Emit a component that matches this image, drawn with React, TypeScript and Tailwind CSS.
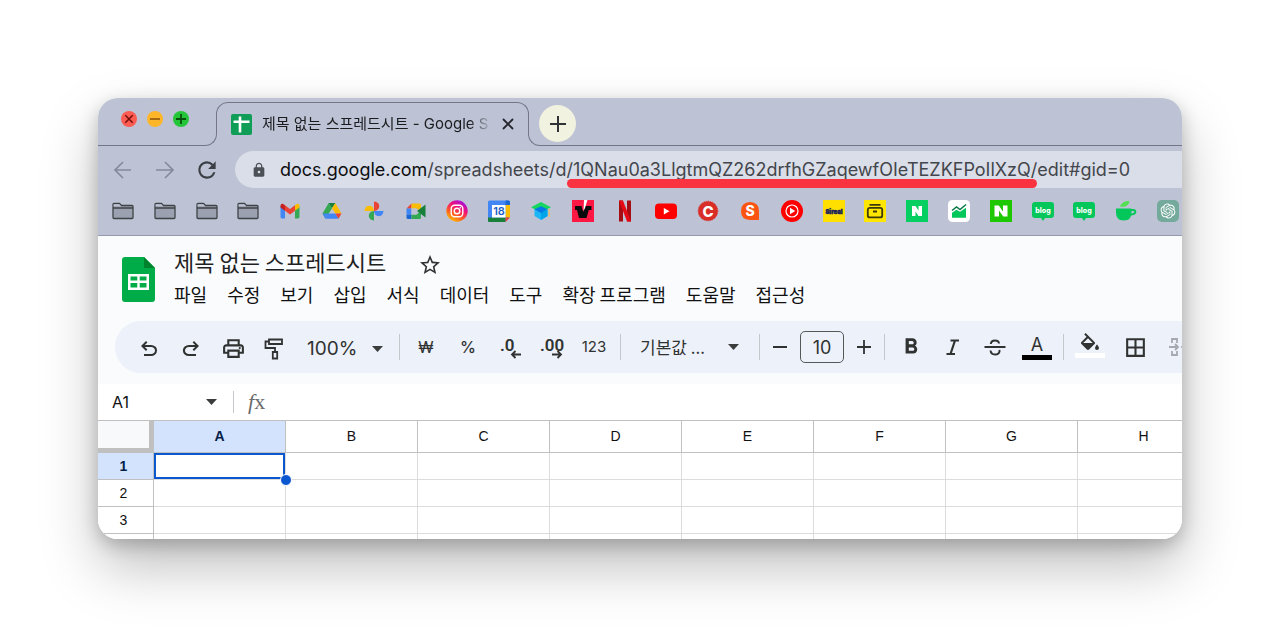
import type { ReactNode } from 'react';
import { MdBorderAll, MdFormatBold, MdLock, MdRefresh, MdStarBorder } from 'react-icons/md';
import { RiOpenaiFill } from 'react-icons/ri';

const MENUS = ['파일', '수정', '보기', '삽입', '서식', '데이터', '도구', '확장 프로그램', '도움말', '접근성'];
const COLUMNS = ['A', 'B', 'C', 'D', 'E', 'F', 'G', 'H'];
const ROWS = [1, 2, 3];

const LATIN = "font-['Inter','Noto_Sans_CJK_KR',sans-serif]";
const HANGUL = "font-['Noto_Sans_CJK_KR',sans-serif]";

function Icon({ children, size = 22 }: { children: ReactNode; size?: number }) {
  return (
    <svg width={size} height={size} viewBox="0 0 22 22" fill="none" aria-hidden="true">
      {children}
    </svg>
  );
}

function Folder() {
  return (
    <Icon>
      <path d="M1 17.5V4.500q0-1 1-1h5.500l2 2H20q1 0 1 1v11q0 1-1 1H2q-1 0-1-1z" fill="#9ba1b0" stroke="#3f4246" strokeWidth="1.3" />
      <path d="M1.600 4.200h5.700l1.700 2H1.600z" fill="#bdc3d4" />
      <path d="M1 8h20" stroke="#3f4246" strokeWidth="1.3" />
    </Icon>
  );
}

function Blog() {
  return (
    <Icon>
      <path d="M3 2h16q3 0 3 3v10q0 3-3 3h-6l-2 3-2-3H3q-3 0-3-3V5q0-3 3-3z" fill="#03c75a" />
      <text x="11" y="12.5" fontSize="7" fontWeight="800" fill="#fff" textAnchor="middle">blog</text>
    </Icon>
  );
}

const BOOKMARKS: { label: string; icon: ReactNode }[] = [
  { label: '폴더 1', icon: <Folder /> },
  { label: '폴더 2', icon: <Folder /> },
  { label: '폴더 3', icon: <Folder /> },
  { label: '폴더 4', icon: <Folder /> },
  {
    label: 'Gmail',
    icon: (
      <Icon>
        <path d="M1.5 6v11q0 1.4 1.4 1.4H6V9.5z" fill="#4285f4" />
        <path d="M20.5 6v11q0 1.4-1.4 1.4H16V9.5z" fill="#34a853" />
        <path d="M6 5.2l5 3.900 5-3.900v5.500l-5 3.900-5-3.900z" fill="#ea4335" />
        <path d="M1.500 6q0-2.500 2.300-2.200L6 5.200v5.600L1.500 7.400z" fill="#c5221f" />
        <path d="M20.500 6q0-2.500-2.300-2.200L16 5.200v5.600l4.500-3.400z" fill="#fbbc04" />
      </Icon>
    ),
  },
  {
    label: 'Drive',
    icon: (
      <Icon>
        <path d="M7.700 3L1.500 13.500l3 5.200L11 8.300z" fill="#34a853" />
        <path d="M7.700 3h6.600L11 8.300z" fill="#188038" />
        <path d="M14.300 3l6.200 10.500h-6.200L11 8.300z" fill="#fbbc04" />
        <path d="M4.500 18.700l3-5.200h6.800l3.200 5.200z" fill="#4285f4" />
        <path d="M1.500 13.500h6l-3 5.200z" fill="#4285f4" />
        <path d="M14.300 13.500h6.200l-3 5.200z" fill="#ea4335" />
      </Icon>
    ),
  },
  {
    label: 'Photos',
    icon: (
      <Icon>
        <path d="M11 1.500q5.200.5 5.200 4.700T11 11z" fill="#ea4335" />
        <path d="M20.500 11q-.5 5.200-4.700 5.200T11 11z" fill="#4285f4" />
        <path d="M11 20.500q-5.200-.5-5.200-4.700T11 11z" fill="#34a853" />
        <path d="M1.500 11q.5-5.200 4.700-5.200T11 11z" fill="#fbbc04" />
      </Icon>
    ),
  },
  {
    label: 'Meet',
    icon: (
      <Icon>
        <path d="M6.500 3.500v5h-5z" fill="#ea4335" />
        <path d="M1.500 8.500h5v6h-5z" fill="#4285f4" />
        <path d="M1.500 14.500h5v4.500H3q-1.500 0-1.500-1.500z" fill="#1967d2" />
        <path d="M6.500 3.500h8q1.500 0 1.500 1.500v6l-4.500-2.500h-5z" fill="#fbbc04" />
        <path d="M6.500 14.500h5L16 11v6.500q0 1.500-1.500 1.500h-8z" fill="#34a853" />
        <path d="M12 11l8.500-6.500v13z" fill="#188038" />
        <path d="M6.500 8.500h5v6h-5z" fill="#bdc3d4" />
      </Icon>
    ),
  },
  {
    label: 'Instagram',
    icon: (
      <Icon>
        <defs>
          <linearGradient id="insta" x1=".2" y1="1" x2=".8" y2="0">
            <stop offset="0" stopColor="#ffc800" />
            <stop offset=".35" stopColor="#ff5a24" />
            <stop offset=".65" stopColor="#f0107a" />
            <stop offset="1" stopColor="#9a10ee" />
          </linearGradient>
        </defs>
        <circle cx="11" cy="11" r="10.7" fill="url(#insta)" />
        <rect x="5.2" y="5.2" width="11.6" height="11.6" rx="3.5" stroke="#fff" strokeWidth="1.4" />
        <circle cx="11" cy="11" r="2.8" stroke="#fff" strokeWidth="1.4" />
        <circle cx="14.2" cy="7.8" r=".8" fill="#fff" />
      </Icon>
    ),
  },
  {
    label: 'Calendar',
    icon: (
      <Icon>
        <path d="M0 2q0-1.500 1.500-1.500h19Q22 .5 22 2v15l-5 5H1.500Q0 22 0 20.500z" fill="#4285f4" />
        <path d="M17.500 5H22v12.500h-4.500z" fill="#fbbc04" />
        <path d="M0 17.500h17.500V22h-16Q0 22 0 20.500z" fill="#188038" />
        <path d="M17.500 .5h3Q22 .5 22 2v3h-4.500z" fill="#1967d2" />
        <path d="M17.500 17.500H22L17.500 22z" fill="#ea4335" />
        <path d="M4 5h13.500v12.500H4z" fill="#fff" />
        <text x="11" y="15.2" fontSize="11" fontWeight="600" fill="#1a5fc8" textAnchor="middle">18</text>
      </Icon>
    ),
  },
  {
    label: 'Class',
    icon: (
      <Icon>
        <path d="M4.500 9.500L11 6l6.500 3.500v6.500L11 20l-6.500-4z" fill="#1cb5f5" />
        <path d="M11 12.500l6.500-3v6.500L11 20z" fill="#00a5e8" />
        <path d="M11 2l10 5.200-10 5.300L1 7.200z" fill="#16d65f" />
        <path d="M4.500 9.300L11 6.200l6.500 3.100L11 13z" fill="#0579e8" />
        <path d="M19.300 9v8" stroke="#e4bd72" strokeWidth="1.5" />
      </Icon>
    ),
  },
  {
    label: 'V',
    icon: (
      <Icon>
        <path d="M0 0h22v22H0z" fill="#ff1744" />
        <path d="M3 6h6.500l1.700 6L13 6h6.500v4h-2.700L14.500 18H7L5 10H3z" fill="#0b0b0d" />
        <path d="M12 0h3.500l-2.500 8-1.500 3z" fill="#fff" />
      </Icon>
    ),
  },
  {
    label: 'Netflix',
    icon: (
      <Icon>
        <path d="M5 .5h4v21H5zM13 .5h4v21h-4z" fill="#a50d14" />
        <path d="M5 .5h4l8 21h-4z" fill="#e50914" />
      </Icon>
    ),
  },
  {
    label: 'YouTube',
    icon: (
      <Icon>
        <rect x="0" y="3.5" width="22" height="15.5" rx="4" fill="#f00" />
        <path d="M8.800 8l5.700 3.200-5.700 3.200z" fill="#fff" />
      </Icon>
    ),
  },
  {
    label: 'C',
    icon: (
      <Icon>
        <circle cx="11" cy="11" r="9.8" fill="#d92d27" stroke="#d92d27" strokeDasharray="1 1" />
        <text x="11" y="16.5" fontSize="15" fontWeight="800" fill="#fff" textAnchor="middle">C</text>
      </Icon>
    ),
  },
  {
    label: 'S',
    icon: (
      <Icon>
        <path d="M11 2q9 .3 9 9v9h-9q-9-.3-9-9t9-9z" fill="#fb5310" />
        <text x="11" y="16" fontSize="14" fontWeight="800" fill="#fff" textAnchor="middle">S</text>
      </Icon>
    ),
  },
  {
    label: 'YouTube Music',
    icon: (
      <Icon>
        <circle cx="11" cy="11" r="11" fill="#f00" />
        <circle cx="11" cy="11" r="6" stroke="#fff" strokeWidth="1.2" />
        <path d="M9 7.800l5.200 3.200L9 14.200z" fill="#fff" />
      </Icon>
    ),
  },
  {
    label: 'Sireal',
    icon: (
      <Icon>
        <path d="M0 0h22v22H0z" fill="#ffdf00" />
        <text x="11" y="13.5" fontSize="6" fontWeight="900" fill="#17215c" stroke="#17215c" strokeWidth=".5" textAnchor="middle">Sireal</text>
      </Icon>
    ),
  },
  {
    label: 'Box',
    icon: (
      <Icon>
        <path d="M0 0h22v22H0z" fill="#ffe600" />
        <path d="M5.500 4.800h11" stroke="#3c3a0b" strokeWidth="1.8" />
        <rect x="3.8" y="7.8" width="14.4" height="9.6" rx="2" stroke="#3c3a0b" strokeWidth="1.8" />
        <path d="M9 11.500h4" stroke="#3c3a0b" strokeWidth="1.8" />
      </Icon>
    ),
  },
  {
    label: 'Naver',
    icon: (
      <Icon>
        <path d="M0 0h22v22H0z" fill="#04cf60" />
        <path d="M6 6h3.500l3 4.500V6H16v10h-3.500l-3-4.500V16H6z" fill="#fff" />
      </Icon>
    ),
  },
  {
    label: 'Chart',
    icon: (
      <Icon>
        <rect width="22" height="22" rx="4.5" fill="#fff" />
        <path d="M4 12.800l4.500-3 3.500 2 6-4v10H4z" fill="#03c75a" />
        <path d="M4 10.500l4.500-3.500 3.500 2.500 6-5" stroke="#0a7a48" strokeWidth="1.5" />
      </Icon>
    ),
  },
  {
    label: 'Naver Home',
    icon: (
      <Icon>
        <path d="M0 0h22v22H0z" fill="#1ec800" />
        <path d="M4.500 5.500h4.300l4.200 6v-6h4.500v11h-4.300l-4.200-6v6H4.500z" fill="#fff" />
      </Icon>
    ),
  },
  { label: 'Blog 1', icon: <Blog /> },
  { label: 'Blog 2', icon: <Blog /> },
  {
    label: 'Cafe',
    icon: (
      <Icon>
        <path d="M1 8.500h15.500v4q0 8-7.700 8T1 12.500z" fill="#03c75a" />
        <path d="M15.500 10h2.800q2.400.3 2 2.300t-5 2.400" stroke="#03c75a" strokeWidth="2" />
        <path d="M5 6.800Q6.500 1 14.500 1q-1 5.800-7 5.800z" fill="#52e052" />
      </Icon>
    ),
  },
  {
    label: 'ChatGPT',
    icon: (
      <span className="flex size-[22px] items-center justify-center rounded-[5px] bg-[#74aa9c] text-white">
        <RiOpenaiFill size={18} />
      </span>
    ),
  },
];

function ToolButton({ label, children }: { label: string; children: ReactNode }) {
  return (
    <button type="button" aria-label={label} className="flex h-9 w-[42px] shrink-0 items-center justify-center">
      {children}
    </button>
  );
}

function Divider() {
  return <div className="h-[26px] w-px shrink-0 bg-[#c4c7cc]" />;
}

function Caret() {
  return (
    <svg width="11" height="6" viewBox="0 0 11 6" className="pointer-events-none shrink-0" aria-hidden="true">
      <path d="M0 0h11L5.500 6z" fill="#3a3d3b" />
    </svg>
  );
}

function TabStrip() {
  return (
    <div className="flex h-12">
      <div className="grid w-[119px] shrink-0">
        <div className="col-start-1 row-start-1 h-[24px] self-end rounded-br-[12px] border-r border-b border-[#747688]" />
        <div className="col-start-1 row-start-1 flex gap-[10px] pt-[13px] pl-[23px]">
          <button type="button" aria-label="닫기" className="size-4 rounded-full bg-[#fe5b52]">
            <svg viewBox="0 0 16 16" stroke="#730d08" strokeWidth="1.5"><path d="M4.300 4.300l7.400 7.400M11.700 4.300l-7.400 7.400" /></svg>
          </button>
          <button type="button" aria-label="최소화" className="size-4 rounded-full bg-[#fdb62a]">
            <svg viewBox="0 0 16 16" stroke="#8a5006" strokeWidth="1.5"><path d="M3 8h10" /></svg>
          </button>
          <button type="button" aria-label="최대화" className="size-4 rounded-full bg-[#25c53a]">
            <svg viewBox="0 0 16 16" stroke="#06520c" strokeWidth="1.8"><path d="M3 8h10M8 3v10" /></svg>
          </button>
        </div>
      </div>

      <div className="-ml-px grid w-[313px] shrink-0 pt-1">
        <div className="col-start-1 row-start-1 h-[20px] rounded-t-[12px] border-x border-t border-[#747688]" />
        <div role="tab" aria-selected="true" className="col-start-1 row-start-1 flex items-center pl-[15px]">
          <svg width="21" height="21" viewBox="0 0 21 21" aria-hidden="true">
            <rect width="21" height="21" rx="2" fill="#0f9d58" />
            <path d="M2.500 7.800h16M9 2.500v16" stroke="#fff" strokeWidth="2.6" />
          </svg>
          <span className={`ml-[10px] w-[230px] text-[15px] leading-6 whitespace-nowrap text-[#1b1c20] mask-r-from-90% ${LATIN}`}>
            제목 없는 스프레드시트 - Google S
          </span>
          <button type="button" aria-label="탭 닫기" className="ml-[7px] p-[3px]">
            <svg width="12" height="12" viewBox="0 0 12 12" stroke="#24262b" strokeWidth="1.8"><path d="M1 1l10 10M11 1L1 11" /></svg>
          </button>
        </div>
      </div>

      <div className="-ml-px grid grow">
        <div className="col-start-1 row-start-1 h-[24px] self-end rounded-bl-[12px] border-b border-l border-[#747688]" />
        <button
          type="button"
          aria-label="새 탭"
          className="col-start-1 row-start-1 mt-[7px] ml-[11px] flex size-[37px] items-center justify-center rounded-full bg-[#f1f2df]"
        >
          <svg width="16" height="16" viewBox="0 0 16 16" stroke="#303236" strokeWidth="2"><path d="M0 8h16M8 0v16" /></svg>
        </button>
      </div>
    </div>
  );
}

function AddressBar() {
  return (
    <div className="flex pt-[5px] pl-[14px]">
      <button type="button" aria-label="뒤로" className="mr-[20px] shrink-0">
        <svg width="22" height="22" viewBox="0 0 22 22" fill="none" stroke="#85899a" strokeWidth="1.7"><path d="M19 11H3M11 3l-8 8 8 8" /></svg>
      </button>
      <button type="button" aria-label="앞으로" className="mr-[18px] shrink-0">
        <svg width="22" height="22" viewBox="0 0 22 22" fill="none" stroke="#85899a" strokeWidth="1.7"><path d="M2 11h17M11 3l8 8-8 8" /></svg>
      </button>
      <button type="button" aria-label="새로고침" className="mr-[15px] shrink-0 text-[#3c4046]">
        <MdRefresh size={26} />
      </button>
      <div className="flex h-[37px] min-w-0 grow items-center rounded-l-full bg-[#dadee8] pl-4">
        <MdLock size={16} className="shrink-0 text-[#4b4f56]" />
        <div
          role="textbox"
          aria-label="주소"
          className={`ml-[13px] text-[18px] leading-6 whitespace-nowrap text-[#43464c] ${LATIN}`}
        >
          <span className="text-[#0d0e11]">docs.google.com</span>
          /spreadsheets/d/
          <span className="relative">
            1QNau0a3LlgtmQZ262drfhGZaqewfOIeTEZKFPoIlXzQ
            <span className="absolute inset-x-[-6px] -bottom-[8px] h-[9px] rounded-full bg-[#fa3340]" />
          </span>
          /edit#gid=0
        </div>
      </div>
    </div>
  );
}

function BookmarksBar() {
  return (
    <nav className={`flex h-12 items-center justify-between border-b border-[#9599ab] pr-[3px] pb-px pl-[14px] ${LATIN}`}>
      {BOOKMARKS.map(({ label, icon }) => (
        <a key={label} href="#" aria-label={label} className="shrink-0">
          {icon}
        </a>
      ))}
    </nav>
  );
}

function DocHeader() {
  return (
    <header className={`flex pt-[9px] pb-[15px] pl-6 ${HANGUL}`}>
      <svg width="33" height="45" viewBox="0 0 33 45" className="mt-3 shrink-0" aria-label="Sheets">
        <path d="M3 0h19l11 11v31q0 3-3 3H3q-3 0-3-3V3q0-3 3-3z" fill="#00ac47" />
        <path d="M22 0l11 11H22z" fill="#00832d" />
        <path d="M6 17h21v16H6zM8.500 19.500v4h6.800v-4zM17.700 19.500v4h6.800v-4zM8.500 26v4.500h6.800V26zM17.700 26v4.500h6.800V26z" fill="#fff" fillRule="evenodd" />
      </svg>
      <div className="ml-[19px] flex flex-col gap-[5px]">
        <div className="flex h-8 items-center">
          <input
            aria-label="문서 이름"
            defaultValue="제목 없는 스프레드시트"
            className="h-8 w-[244px] bg-transparent text-[22px] leading-8 text-[#1f1f1f]"
          />
          <button type="button" aria-label="별표" className="pt-2 text-[#303331]">
            <MdStarBorder size={24} />
          </button>
        </div>
        <div className="flex gap-5 text-[18px] leading-6 text-[#111]">
          {MENUS.map((menu) => (
            <button key={menu} type="button" className="shrink-0 whitespace-nowrap">
              {menu}
            </button>
          ))}
        </div>
      </div>
    </header>
  );
}

function Toolbar() {
  return (
    <div className={`ml-[17px] flex h-[52px] items-center overflow-hidden rounded-l-full bg-[#edf1fa] pl-[13px] text-[#303331] ${LATIN}`}>
      <div className="flex shrink-0 items-center pt-[3px]">
        <ToolButton label="실행취소">
          <svg width="24" height="24" viewBox="0 -960 960 960" fill="currentColor">
            <path d="M280-200v-80h284q63 0 109.500-40T720-420q0-60-46.500-100T564-560H312l104 104-56 56-200-200 200-200 56 56-104 104h252q97 0 169.500 63T800-420q0 94-72.500 157T564-200H280Z" />
          </svg>
        </ToolButton>
        <ToolButton label="재실행">
          <svg width="24" height="24" viewBox="0 -960 960 960" fill="currentColor">
            <path d="M396-200q-97 0-169.500-63T154-420q0-94 72.500-157T396-640h252L544-744l56-56 200 200-200 200-56-56 104-104H396q-63 0-109.500 40T240-420q0 60 46.500 100T396-280h284v80H396Z" />
          </svg>
        </ToolButton>
        <ToolButton label="인쇄">
          <svg width="25" height="25" viewBox="0 -960 960 960" fill="currentColor">
            <path d="M640-640v-120H320v120h-80v-200h480v200h-80Zm-480 80h640-640Zm560 100q17 0 28.500-11.500T760-500q0-17-11.500-28.500T720-540q-17 0-28.500 11.500T680-500q0 17 11.500 28.500T720-460Zm-80 260v-160H320v160h320Zm80 80H240v-160H80v-240q0-51 35-85.500t85-34.500h560q51 0 85.500 34.500T880-520v240H720v160Zm80-240v-160q0-17-11.500-28.500T760-560H200q-17 0-28.500 11.500T160-520v160h80v-80h480v80h80Z" />
          </svg>
        </ToolButton>
        <ToolButton label="서식 복사">
          <Icon>
            <path d="M5 1.500h13v4.500H5zM5 3.500H1.500v6.500h9.500v4M8.800 14h4.400v6.500H8.800z" stroke="currentColor" strokeWidth="1.8" />
          </Icon>
        </ToolButton>
        <div className="flex w-[103px] items-center pl-[11px]">
          <select aria-label="확대/축소" className="w-[65px] shrink-0 appearance-none bg-transparent text-[19px] leading-6">
            <option>100%</option>
          </select>
          <Caret />
        </div>
      </div>
      <Divider />
      <div className="flex shrink-0 px-[5px]">
        <ToolButton label="통화 형식"><span className="text-[16px]">₩</span></ToolButton>
        <ToolButton label="퍼센트 형식"><span className="text-[16px] font-medium">%</span></ToolButton>
        <ToolButton label="소수점 이하 자릿수 감소">
          <svg width="26" height="28" viewBox="0 0 26 28" fill="none" stroke="currentColor" className="font-['Roboto',sans-serif]">
            <text x="3" y="18" fontSize="17" fontWeight="600" fill="currentColor" stroke="none">.0</text>
            <path d="M24 21.500h-8M18.500 18l-3.500 3.500 3.500 3.500" strokeWidth="1.8" />
          </svg>
        </ToolButton>
        <ToolButton label="소수점 이하 자릿수 늘림">
          <svg width="28" height="28" viewBox="0 0 28 28" fill="none" stroke="currentColor" className="font-['Roboto',sans-serif]">
            <text x="2" y="18" fontSize="17" fontWeight="600" fill="currentColor" stroke="none">.00</text>
            <path d="M14 21.500h8M19.500 18l3.500 3.500-3.500 3.500" strokeWidth="1.8" />
          </svg>
        </ToolButton>
        <ToolButton label="서식 더보기"><span className="text-[15px]">123</span></ToolButton>
      </div>
      <Divider />
      <div className="flex w-[138px] shrink-0 items-center pl-[19px]">
        <select aria-label="글꼴" className={`w-[88px] shrink-0 appearance-none bg-transparent text-[17px] leading-6 ${HANGUL}`}>
          <option>기본값 ...</option>
        </select>
        <Caret />
      </div>
      <Divider />
      <button type="button" aria-label="글꼴 크기 줄이기" className="flex w-[40px] shrink-0 justify-center">
        <svg width="14" height="14" viewBox="0 0 14 14" stroke="currentColor" strokeWidth="1.8"><path d="M0 7h14" /></svg>
      </button>
      <input
        aria-label="글꼴 크기"
        defaultValue="10"
        className="h-8 w-11 shrink-0 rounded-[5px] border border-[#55585a] bg-transparent text-center text-[18px]"
      />
      <button type="button" aria-label="글꼴 크기 늘리기" className="flex w-[40px] shrink-0 justify-center">
        <svg width="14" height="14" viewBox="0 0 14 14" stroke="currentColor" strokeWidth="1.8"><path d="M0 7h14M7 0v14" /></svg>
      </button>
      <Divider />
      <div className="flex shrink-0 px-[5px]">
        <ToolButton label="굵게"><MdFormatBold size={26} /></ToolButton>
        <ToolButton label="기울임꼴">
          <Icon>
            <path d="M8.500 4.500h8.500M4.500 18h8.500M13 4.500L8.500 18" stroke="currentColor" strokeWidth="2.2" />
          </Icon>
        </ToolButton>
        <ToolButton label="취소선">
          <Icon>
            <path d="M0.500 11h21" stroke="currentColor" strokeWidth="1.8" />
            <path d="M6.800 8q.4-3.500 4.200-3.500T15 7.500M6.500 14.500q.5 4 4.500 4t4.500-3.200q0-.8-.3-1.300" stroke="currentColor" strokeWidth="2" />
          </Icon>
        </ToolButton>
        <ToolButton label="텍스트 색상">
          <span className="flex flex-col items-center">
            <span className="text-[18px] leading-5">A</span>
            <span className="h-[5px] w-[30px] bg-black" />
          </span>
        </ToolButton>
      </div>
      <Divider />
      <div className="flex shrink-0 gap-[3px] pl-[5px]">
        <ToolButton label="채우기 색상">
          <span className="flex flex-col items-center gap-[2px] pb-[3px]">
            <svg width="20" height="18" viewBox="2 0 20 18" fill="currentColor" aria-hidden="true">
              <path d="M16.560 8.940L7.620 0 6.210 1.410l2.380 2.380-5.150 5.150c-.59.59-.59 1.540 0 2.120l5.500 5.500c.29.29.68.44 1.060.44s.77-.15 1.060-.44l5.500-5.500c.59-.58.59-1.530 0-2.120zM5.210 10L10 5.210 14.790 10H5.210zM19 11.500s-2 2.170-2 3.500c0 1.100.9 2 2 2s2-.9 2-2c0-1.330-2-3.500-2-3.500z" />
            </svg>
            <span className="h-[5px] w-[30px] bg-white" />
          </span>
        </ToolButton>
        <ToolButton label="테두리"><MdBorderAll size={25} /></ToolButton>
        <ToolButton label="셀 병합">
          <svg width="22" height="20" viewBox="0 0 22 20" fill="none" stroke="#a5a8ae" strokeWidth="1.8">
            <path d="M8 6V2H3v4M3 14v4h5v-4M0 10h9M6 7l3 3-3 3M14 6V2h5v4M19 14v4h-5v-4M22 10h-9M16 7l-3 3 3 3" />
          </svg>
        </ToolButton>
      </div>
    </div>
  );
}

function FormulaBar() {
  return (
    <div className="flex h-9 items-center bg-white pl-[14px] font-['Liberation_Sans',sans-serif]">
      <input aria-label="이름 상자" defaultValue="A1" className={`w-[94px] bg-transparent text-[16px] text-[#111] ${LATIN}`} />
      <Caret />
      <div className="ml-4 h-[22px] w-px bg-[#c4c7cc]" />
      <span className="ml-[14px] font-['Liberation_Serif',serif] text-[22px] leading-6 text-[#6b6b6b]">
        <i>f</i>x
      </span>
      <input aria-label="수식" className="ml-2 min-w-0 grow bg-transparent" />
    </div>
  );
}

function Sheet() {
  return (
    <div className="overflow-hidden bg-white">
      <table className="w-[1112px] table-fixed border-separate border-spacing-0 text-center font-['Liberation_Sans',sans-serif] text-[14px] leading-5 text-[#111]">
        <thead>
          <tr className="h-[33px]">
            <th aria-label="모두 선택" className="w-14 border-t border-r-[5px] border-b-[5px] border-[#c0c0c0] bg-[#f8f9fa]" />
            {COLUMNS.map((col) => (
              <th
                key={col}
                className={
                  col === 'A'
                    ? 'border-y border-r border-[#c0c0c0] bg-[#d3e3fd] pb-px font-bold text-[#041e49]'
                    : 'border-y border-r border-[#c0c0c0] pb-px font-normal'
                }
              >
                {col}
              </th>
            ))}
          </tr>
        </thead>
        <tbody>
          {ROWS.map((row) => (
            <tr key={row} className="h-[27px]">
              <th
                className={
                  row === 1
                    ? 'border-r border-b border-[#c0c0c0] bg-[#d3e3fd] pr-1 font-bold text-[#041e49]'
                    : 'border-r border-b border-[#c0c0c0] pr-1 font-normal'
                }
              >
                {row}
              </th>
              {COLUMNS.map((col) => (
                <td key={col} className="relative border-r border-b border-[#dcdcdc]">
                  {row === 1 && col === 'A' && (
                    <>
                      <div className="absolute inset-0 border-2 border-[#0b57d0]" />
                      <div className="absolute -right-[7px] -bottom-[7px] z-10 size-3 rounded-full border border-white bg-[#0b57d0]" />
                    </>
                  )}
                </td>
              ))}
            </tr>
          ))}
          <tr className="h-[5px]" aria-hidden="true">
            <td className="border-r border-[#c0c0c0]" />
            {COLUMNS.map((col) => (
              <td key={col} className="border-r border-[#dcdcdc]" />
            ))}
          </tr>
        </tbody>
      </table>
    </div>
  );
}

export default function App() {
  return (
    <div className="min-h-screen bg-white px-[98px] py-[98px]">
      <main className="rounded-[20px] shadow-[0_28px_56px_rgba(0,0,0,0.25),0_6px_18px_rgba(0,0,0,0.22)]">
        <div className="overflow-hidden rounded-[20px] bg-[#f9fbfd]">
          <div className="bg-[#bdc3d4]">
            <TabStrip />
            <AddressBar />
            <BookmarksBar />
          </div>
          <DocHeader />
          <Toolbar />
          <div className="h-[11px]" />
          <FormulaBar />
          <Sheet />
        </div>
      </main>
    </div>
  );
}
